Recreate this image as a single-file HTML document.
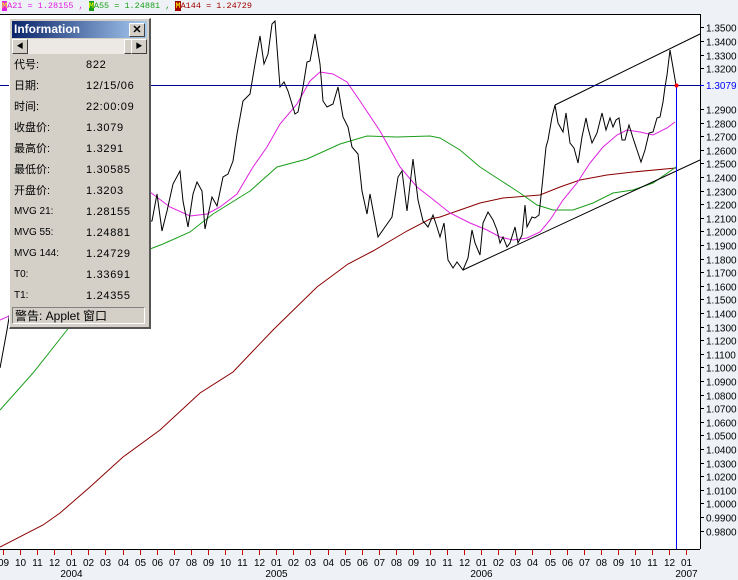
<!DOCTYPE html>
<html><head><meta charset="utf-8"><style>
html,body{margin:0;padding:0;width:738px;height:580px;overflow:hidden;background:#eef2f6;font-family:"Liberation Sans","Noto Sans CJK SC",sans-serif}
#top{position:absolute;left:2px;top:0;font:8.5px "Liberation Mono",monospace;line-height:13px;white-space:pre}
#panel{position:absolute;left:9px;top:18px;width:139px;height:308px;background:#d4d0c8;border-top:1px solid #fff;border-left:1px solid #fff;border-right:2px solid #555;border-bottom:2px solid #555;}
#title{position:absolute;left:2px;top:2px;width:135px;height:17px;background:linear-gradient(90deg,#0a246a,#a6caf0);color:#fff;font-weight:bold;font-size:12px;line-height:17px;padding-left:2px;box-sizing:border-box}
#close{position:absolute;right:2px;top:2px;width:14px;height:12px;background:#d4d0c8;border:1px solid;border-color:#fff #404040 #404040 #fff;color:#000;font-size:11px;line-height:12px;text-align:center}
#sb{position:absolute;left:2px;top:20px;width:135px;height:15px;background:#ece9e4}
.btn{position:absolute;top:0;width:14px;height:13px;background:#d4d0c8;border:1px solid;border-color:#fff #404040 #404040 #fff;font-size:7px;line-height:13px;text-align:center}
.row{position:absolute;left:4px;font-size:11px;color:#000;height:14px;line-height:14px}
.val{position:absolute;left:72px;font-size:11px;letter-spacing:0.7px;line-height:14px}
#warn{position:absolute;left:2px;top:288px;width:133px;height:17px;border:1px solid;border-color:#808080 #fff #fff #808080;font-size:12px;line-height:17px;padding-left:2px;box-sizing:border-box}
</style></head><body>
<svg width="738" height="580" style="position:absolute;left:0;top:0" xmlns="http://www.w3.org/2000/svg">
<rect x="0" y="14" width="700" height="535" fill="#fff"/>
<line x1="0" y1="14.5" x2="700" y2="14.5" stroke="#000"/>
<line x1="700.5" y1="14" x2="700.5" y2="549" stroke="#000"/>
<line x1="0" y1="549.5" x2="700" y2="549.5" stroke="#000"/>
<g fill="none" stroke-width="1">
<polyline stroke="#8b0000" points="0,547 43,525 60,513 90,487 123,457 160,430 200,393 233,372 273,330 317,287 348,264 373,251 407,231 430,219 440,217 460,210 480,203 503,198 540,195 560,187 580,180 607,175 633,172 676,168"/>
<polyline stroke="#1a9e1a" points="0,410 33,373 67,330 100,290 130,262 150,249 163,244 190,232 213,214 250,191 277,167 307,159 340,144 367,136 397,137 430,136 440,138 460,150 480,167 500,180 520,193 537,205 553,210 573,210 593,203 613,193 633,190 653,183 676,167"/>
<polyline stroke="#e020e0" points="0,320 9,316 40,280 150,192 170,207 190,216 207,214 220,207 237,194 253,167 267,147 280,124 297,104 310,81 320,72 333,74 347,82 360,101 380,131 400,167 417,187 430,197 450,213 470,223 487,230 500,237 513,240 527,238 540,232 550,220 563,200 577,183 590,163 603,147 617,135 627,130 640,132 653,135 667,128 675,122"/>
<polyline stroke="#000" points="0,368 7,330 20,250 152,221 157,194 162,231 167,211 173,184 180,171 183,201 188,227 193,194 197,182 202,191 205,229 212,197 217,206 223,177 228,174 233,161 237,134 243,101 250,94 255,64 260,36 264,64 268,54 272,24 275,21 280,87 284,82 288,91 295,114 298,112 303,87 307,62 310,61 315,34 320,64 323,101 327,107 333,104 338,87 343,117 348,127 352,147 358,154 362,191 367,214 370,194 378,237 385,227 392,217 398,177 402,171 407,211 413,159 418,200 423,221 428,227 433,215 437,227 440,237 444,223 448,260 453,268 457,262 463,270 468,258 472,230 475,243 480,255 483,223 488,212 493,220 497,230 500,243 503,237 507,247 510,243 515,227 518,243 522,235 525,205 527,227 532,217 535,218 539,215 543,177 546,147 548,140 552,117 555,105 558,123 563,132 566,113 570,143 574,148 578,163 582,137 586,118 588,128 592,143 597,133 602,113 606,130 610,118 613,127 616,120 619,118 622,140 625,140 629,125 633,138 637,150 641,162 645,150 649,133 653,132 657,118 660,117 663,102 665,87 667,75 670,50 676,85"/>
<line x1="555" y1="105" x2="700" y2="34" stroke="#000"/>
<line x1="463" y1="270" x2="700" y2="160" stroke="#000"/>
</g>
<line x1="0" y1="85.5" x2="700" y2="85.5" stroke="#000090"/>
<line x1="676.5" y1="85" x2="676.5" y2="549" stroke="#0000ff"/>
<circle cx="676.5" cy="85.5" r="2" fill="#ff0000"/>
<g id="yax" font-family="Liberation Sans,sans-serif" font-size="10" fill="#000"></g>
<g id="xax" font-family="Liberation Sans,sans-serif" font-size="10" fill="#000"></g>
</svg>
<div id="top"><span style="color:#e020e0"><span style="background:#e020e0;color:#ffff00">M</span>A21 = 1.28155 , </span><span style="color:#1a9e1a"><span style="background:#1a9e1a;color:#ffff00">M</span>A55 = 1.24881 , </span><span style="color:#a00000"><span style="background:#a00000;color:#ffff00">M</span>A144 = 1.24729</span></div>
<div id="panel">
<div id="title">Information<div id="close">✕</div></div>
<div id="sb"><div class="btn" style="left:0">◀</div><div class="btn" style="left:112px;width:6px"></div><div class="btn" style="right:0">▶</div></div>
<div class="row" style="top:39px">代号:<span class="val">822</span></div>
<div class="row" style="top:60px">日期:<span class="val">12/15/06</span></div>
<div class="row" style="top:81px">时间:<span class="val">22:00:09</span></div>
<div class="row" style="top:102px">收盘价:<span class="val">1.3079</span></div>
<div class="row" style="top:123px">最高价:<span class="val">1.3291</span></div>
<div class="row" style="top:144px">最低价:<span class="val">1.30585</span></div>
<div class="row" style="top:165px">开盘价:<span class="val">1.3203</span></div>
<div class="row" style="top:186px;font-size:10px">MVG 21:<span class="val">1.28155</span></div>
<div class="row" style="top:207px;font-size:10px">MVG 55:<span class="val">1.24881</span></div>
<div class="row" style="top:228px;font-size:10px">MVG 144:<span class="val">1.24729</span></div>
<div class="row" style="top:249px;font-size:10px">T0:<span class="val">1.33691</span></div>
<div class="row" style="top:270px;font-size:10px">T1:<span class="val">1.24355</span></div>
<div id="warn">警告: Applet 窗口</div>
</div>
<script>
var ns="http://www.w3.org/2000/svg",y=document.getElementById('yax'),x=document.getElementById('xax');
function t(g,tx,ty,s,c,a){var e=document.createElementNS(ns,'text');e.setAttribute('x',tx);e.setAttribute('y',ty);if(c)e.setAttribute('fill',c);if(a)e.setAttribute('text-anchor',a);e.textContent=s;g.appendChild(e);}
function l(g,x1,y1,x2,y2,c){var e=document.createElementNS(ns,'line');e.setAttribute('x1',x1);e.setAttribute('y1',y1);e.setAttribute('x2',x2);e.setAttribute('y2',y2);e.setAttribute('stroke',c);g.appendChild(e);}
for(var i=0;i<=37;i++){var v=1.35-i*0.01;if(Math.abs(v-1.30)<0.001||Math.abs(v-1.31)<0.001)continue;var yy=Math.round(109+(1.29-v)*1360)+0.5;l(y,700,yy,704,yy,'#000');t(y,706,yy+4,v.toFixed(4));}
l(y,700,85.5,704,85.5,'#0000ff');t(y,706,89,'1.3079','#0000ff');
for(var m=0;m<=40;m++){var xx=Math.round(3+17.08*m)+0.5;if(xx>700)break;l(x,xx,550,xx,555,'#cc0000');var mo=((m+8)%12)+1;t(x,xx,566,(mo<10?'0':'')+mo,null,'middle');if(mo==1)t(x,xx,577,String(2004+Math.floor((m-4)/12)),null,'middle');}
</script>
</body></html>
